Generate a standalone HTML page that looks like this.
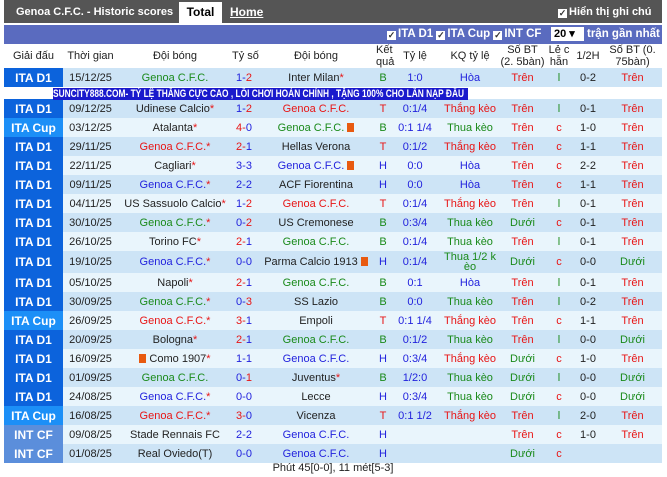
<!DOCTYPE html><html><head><meta charset="utf-8"><style>
body{margin:0;width:667px;height:477px;overflow:hidden;background:#fff;font-family:"Liberation Sans",Arial,sans-serif;font-size:11px}
.top{position:absolute;left:4px;top:0;width:658px;height:23px;background:#555;color:#fff;font-weight:bold;font-size:11px}
.top span{position:absolute;top:6px;white-space:nowrap}
.tab{position:absolute;left:175px;top:2px;width:43px;height:21px;background:#fff;color:#000;text-align:center;line-height:20px;font-size:12px}
.bar{position:absolute;left:4px;top:25px;width:658px;height:19px;background:#5a6bbf;color:#fff;font-weight:bold;font-size:11.5px}
.cb{display:inline-block;width:9px;height:9px;background:#fff;color:#333;font-size:9px;line-height:9px;text-align:center;margin-right:2px;vertical-align:-1px}
table{position:absolute;left:4px;top:44px;width:658px;border-collapse:collapse;table-layout:fixed}
td{padding:0;text-align:center;height:19px;white-space:nowrap;overflow:hidden;color:#222}
tr.h td{height:24px;background:#fff;line-height:12px;white-space:normal;font-size:11px;overflow:visible}
tr:nth-child(even) td{background:#cde4f6}
tr:nth-child(odd) td{background:#e9f5fc}
tr.h td{background:#fff!important}
td.l{color:#fff;font-weight:bold;font-size:12px;background:#0c63dc!important}
td.c{background:#1c8ff7!important}
td.i{background:#5b8edb!important}
.g{color:#1a8a1a}.r{color:#e81515}.b{color:#2222dd}
.ic{display:inline-block;width:7px;height:9px;background:#e85a10;vertical-align:-1px;margin-left:3px}
tr.ad td{height:12px;background:#fff!important}
.ad2{position:absolute;left:53px;top:88px;width:415px;height:12px;background:#1a1acc;overflow:hidden}
.ad2 span{display:block;white-space:nowrap;color:#fff;font-weight:bold;font-size:11px;line-height:12px;transform-origin:0 0;transform:scaleX(0.76)}
.ft{position:absolute;left:4px;top:462px;width:658px;text-align:center;font-size:11px;color:#222}
</style></head><body>
<div class="top"><span style="left:12px">Genoa C.F.C. - Historic scores</span><div class="tab">Total</div><span style="left:226px;text-decoration:underline;font-size:12px;top:5px">Home</span><span style="left:554px"><span class="cb" style="position:static">✓</span>Hiển thị ghi chú</span></div>
<div class="bar"><span style="position:absolute;left:383px;top:3px"><span class="cb">✓</span>ITA D1 <span class="cb">✓</span>ITA Cup <span class="cb">✓</span>INT CF</span><span style="position:absolute;left:547px;top:2px;width:30px;height:14px;background:#fff;color:#000;font-size:11px;line-height:14px;padding-left:3px">20 ▾</span><span style="position:absolute;left:583px;top:3px">trận gần nhất</span></div>
<table>
<colgroup><col style="width:59px"><col style="width:55px"><col style="width:114px"><col style="width:24px"><col style="width:120px"><col style="width:14px"><col style="width:50px"><col style="width:60px"><col style="width:45px"><col style="width:28px"><col style="width:30px"><col style="width:59px"></colgroup>
<tr class="h"><td>Giải đấu</td><td>Thời gian</td><td>Đội bóng</td><td style="white-space:nowrap">Tỷ số</td><td>Đội bóng</td><td>Kết<br>quả</td><td>Tỷ lệ</td><td>KQ tỷ lệ</td><td>Số BT (2. 5bàn)</td><td>Lẻ c hẵn</td><td>1/2H</td><td>Số BT (0. 75bàn)</td></tr>
<tr><td class="l">ITA D1</td><td>15/12/25</td><td class="g">Genoa C.F.C.</td><td><span class="b">1-</span><span class="r">2</span></td><td>Inter Milan<span class="r">*</span></td><td class="g">B</td><td class="b">1:0</td><td class="b">Hòa</td><td class="r">Trên</td><td class="g">l</td><td>0-2</td><td class="r">Trên</td></tr>
<tr class="ad"><td colspan="12"></td></tr>
<tr><td class="l">ITA D1</td><td>09/12/25</td><td>Udinese Calcio<span class="r">*</span></td><td><span class="b">1-</span><span class="r">2</span></td><td class="r">Genoa C.F.C.</td><td class="r">T</td><td class="b">0:1/4</td><td class="r">Thắng kèo</td><td class="r">Trên</td><td class="g">l</td><td>0-1</td><td class="r">Trên</td></tr>
<tr><td class="l c">ITA Cup</td><td>03/12/25</td><td>Atalanta<span class="r">*</span></td><td><span class="r">4-</span><span class="b">0</span></td><td class="g">Genoa C.F.C.<span class="ic"></span></td><td class="g">B</td><td class="b">0:1 1/4</td><td class="g">Thua kèo</td><td class="r">Trên</td><td class="r">c</td><td>1-0</td><td class="r">Trên</td></tr>
<tr><td class="l">ITA D1</td><td>29/11/25</td><td class="r">Genoa C.F.C.*</td><td><span class="r">2-</span><span class="b">1</span></td><td>Hellas Verona</td><td class="r">T</td><td class="b">0:1/2</td><td class="r">Thắng kèo</td><td class="r">Trên</td><td class="r">c</td><td>1-1</td><td class="r">Trên</td></tr>
<tr><td class="l">ITA D1</td><td>22/11/25</td><td>Cagliari<span class="r">*</span></td><td class="b">3-3</td><td class="b">Genoa C.F.C.<span class="ic"></span></td><td class="b">H</td><td class="b">0:0</td><td class="b">Hòa</td><td class="r">Trên</td><td class="r">c</td><td>2-2</td><td class="r">Trên</td></tr>
<tr><td class="l">ITA D1</td><td>09/11/25</td><td class="b">Genoa C.F.C.<span class="r">*</span></td><td class="b">2-2</td><td>ACF Fiorentina</td><td class="b">H</td><td class="b">0:0</td><td class="b">Hòa</td><td class="r">Trên</td><td class="r">c</td><td>1-1</td><td class="r">Trên</td></tr>
<tr><td class="l">ITA D1</td><td>04/11/25</td><td>US Sassuolo Calcio<span class="r">*</span></td><td><span class="b">1-</span><span class="r">2</span></td><td class="r">Genoa C.F.C.</td><td class="r">T</td><td class="b">0:1/4</td><td class="r">Thắng kèo</td><td class="r">Trên</td><td class="g">l</td><td>0-1</td><td class="r">Trên</td></tr>
<tr><td class="l">ITA D1</td><td>30/10/25</td><td class="g">Genoa C.F.C.<span class="r">*</span></td><td><span class="b">0-</span><span class="r">2</span></td><td>US Cremonese</td><td class="g">B</td><td class="b">0:3/4</td><td class="g">Thua kèo</td><td class="g">Dưới</td><td class="r">c</td><td>0-1</td><td class="r">Trên</td></tr>
<tr><td class="l">ITA D1</td><td>26/10/25</td><td>Torino FC<span class="r">*</span></td><td><span class="r">2-</span><span class="b">1</span></td><td class="g">Genoa C.F.C.</td><td class="g">B</td><td class="b">0:1/4</td><td class="g">Thua kèo</td><td class="r">Trên</td><td class="g">l</td><td>0-1</td><td class="r">Trên</td></tr>
<tr><td class="l" style="height:22px">ITA D1</td><td>19/10/25</td><td class="b">Genoa C.F.C.<span class="r">*</span></td><td class="b">0-0</td><td>Parma Calcio 1913<span class="ic"></span></td><td class="b">H</td><td class="b">0:1/4</td><td class="g" style="white-space:normal;line-height:10px">Thua 1/2 k èo</td><td class="g">Dưới</td><td class="r">c</td><td>0-0</td><td class="g">Dưới</td></tr>
<tr><td class="l">ITA D1</td><td>05/10/25</td><td>Napoli<span class="r">*</span></td><td><span class="r">2-</span><span class="b">1</span></td><td class="g">Genoa C.F.C.</td><td class="g">B</td><td class="b">0:1</td><td class="b">Hòa</td><td class="r">Trên</td><td class="g">l</td><td>0-1</td><td class="r">Trên</td></tr>
<tr><td class="l">ITA D1</td><td>30/09/25</td><td class="g">Genoa C.F.C.<span class="r">*</span></td><td><span class="b">0-</span><span class="r">3</span></td><td>SS Lazio</td><td class="g">B</td><td class="b">0:0</td><td class="g">Thua kèo</td><td class="r">Trên</td><td class="g">l</td><td>0-2</td><td class="r">Trên</td></tr>
<tr><td class="l c">ITA Cup</td><td>26/09/25</td><td class="r">Genoa C.F.C.*</td><td><span class="r">3-</span><span class="b">1</span></td><td>Empoli</td><td class="r">T</td><td class="b">0:1 1/4</td><td class="r">Thắng kèo</td><td class="r">Trên</td><td class="r">c</td><td>1-1</td><td class="r">Trên</td></tr>
<tr><td class="l">ITA D1</td><td>20/09/25</td><td>Bologna<span class="r">*</span></td><td><span class="r">2-</span><span class="b">1</span></td><td class="g">Genoa C.F.C.</td><td class="g">B</td><td class="b">0:1/2</td><td class="g">Thua kèo</td><td class="r">Trên</td><td class="g">l</td><td>0-0</td><td class="g">Dưới</td></tr>
<tr><td class="l">ITA D1</td><td>16/09/25</td><td><span class="ic" style="margin:0 3px 0 0"></span>Como 1907<span class="r">*</span></td><td class="b">1-1</td><td class="b">Genoa C.F.C.</td><td class="b">H</td><td class="b">0:3/4</td><td class="r">Thắng kèo</td><td class="g">Dưới</td><td class="r">c</td><td>1-0</td><td class="r">Trên</td></tr>
<tr><td class="l">ITA D1</td><td>01/09/25</td><td class="g">Genoa C.F.C.</td><td><span class="b">0-</span><span class="r">1</span></td><td>Juventus<span class="r">*</span></td><td class="g">B</td><td class="b">1/2:0</td><td class="g">Thua kèo</td><td class="g">Dưới</td><td class="g">l</td><td>0-0</td><td class="g">Dưới</td></tr>
<tr><td class="l">ITA D1</td><td>24/08/25</td><td class="b">Genoa C.F.C.<span class="r">*</span></td><td class="b">0-0</td><td>Lecce</td><td class="b">H</td><td class="b">0:3/4</td><td class="g">Thua kèo</td><td class="g">Dưới</td><td class="r">c</td><td>0-0</td><td class="g">Dưới</td></tr>
<tr><td class="l c">ITA Cup</td><td>16/08/25</td><td class="r">Genoa C.F.C.*</td><td><span class="r">3-</span><span class="b">0</span></td><td>Vicenza</td><td class="r">T</td><td class="b">0:1 1/2</td><td class="r">Thắng kèo</td><td class="r">Trên</td><td class="g">l</td><td>2-0</td><td class="r">Trên</td></tr>
<tr><td class="l i">INT CF</td><td>09/08/25</td><td>Stade Rennais FC</td><td class="b">2-2</td><td class="b">Genoa C.F.C.</td><td class="b">H</td><td></td><td></td><td class="r">Trên</td><td class="r">c</td><td>1-0</td><td class="r">Trên</td></tr>
<tr><td class="l i">INT CF</td><td>01/08/25</td><td>Real Oviedo(T)</td><td class="b">0-0</td><td class="b">Genoa C.F.C.</td><td class="b">H</td><td></td><td></td><td class="g">Dưới</td><td class="r">c</td><td></td><td></td></tr>
</table>
<div class="ad2"><span>SUNCITY888.COM- TỶ LỆ THẮNG CỰC CAO , LỐI CHƠI HOÀN CHỈNH , TẶNG 100% CHO LẦN NẠP ĐẦU</span></div>
<div class="ft">Phút 45[0-0], 11 mét[5-3]</div>
</body></html>
